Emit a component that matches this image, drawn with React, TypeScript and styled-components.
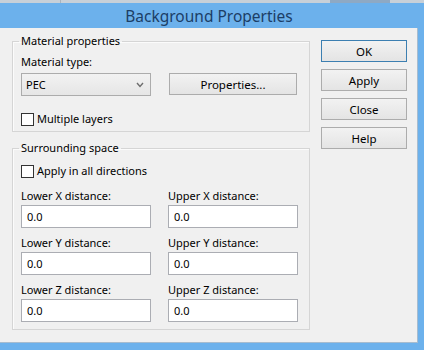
import React from "react";
import styled, { createGlobalStyle } from "styled-components";

const Global = createGlobalStyle`
  html, body { margin: 0; padding: 0; background: #f0f0f0; }
  body { font-family: "Noto Sans", "Open Sans", sans-serif; font-size: 11px; color: #000; }
  #root { width: 424px; height: 350px; overflow: hidden; }
`;

const Window = styled.div`
  width: 424px;
  height: 350px;
  display: flex;
  flex-direction: column;
`;

const TopStrip = styled.div`
  height: 3px;
  background: linear-gradient(90deg, #c8d0d8 0 60px, #aab4bd 60px 61px, #c8d0d8 61px 330px, #8ea9c4 330px 390px, #c8d0d8 390px);
`;

const TitleBar = styled.div`
  height: 25px;
  background: #6cb1ec;
  color: #1c3e66;
  font-size: 15.5px;
  display: flex;
  align-items: center;
  justify-content: center;
  padding-right: 6px;
`;

const Frame = styled.div`
  flex: 1;
  display: flex;
  border-right: 6px solid #6cb1ec;
  border-bottom: 7px solid #6cb1ec;
  min-height: 0;
`;

const Client = styled.div`
  flex: 1;
  background: #f0f0f0;
  border-right: 1px solid #a7bccf;
  border-bottom: 1px solid #a7bccf;
  padding-left: 12px;
  display: flex;
  align-items: flex-start;
`;

const LeftCol = styled.div`
  width: 298px;
  padding-top: 5px;
  display: flex;
  flex-direction: column;
`;

const Group = styled.fieldset<{ $mt?: number; $pt: number; $pb: number }>`
  margin: ${(p) => p.$mt ?? 0}px 0 0 0;
  padding: ${(p) => p.$pt}px 8px ${(p) => p.$pb}px 8px;
  border: 1px solid #d5d5d5;
  box-shadow: inset 1px 1px 0 #fbfbfb;
  min-width: 0;
`;

const Legend = styled.legend`
  padding: 0 2px;
  margin-left: -2px;
  line-height: 16px;
`;

const Label = styled.div<{ $mt?: number }>`
  line-height: 16px;
  margin-top: ${(p) => p.$mt ?? 0}px;
  white-space: nowrap;
`;

const Row = styled.div<{ $mt?: number }>`
  display: flex;
  align-items: flex-start;
  margin-top: ${(p) => p.$mt ?? 0}px;
`;

const Select = styled.div`
  width: 130px;
  height: 23px;
  box-sizing: border-box;
  border: 1px solid #acacac;
  background: linear-gradient(#f2f2f2, #e6e6e6);
  display: flex;
  align-items: center;
  justify-content: space-between;
  padding: 0 6px 0 4px;
`;

const Button = styled.div<{ $w: number; $focus?: boolean }>`
  width: ${(p) => p.$w}px;
  height: 22px;
  box-sizing: border-box;
  border: 1px solid ${(p) => (p.$focus ? "#3c7fb1" : "#acacac")};
  background: linear-gradient(#f2f2f2, #e4e4e4);
  display: flex;
  align-items: center;
  justify-content: center;
  font-size: 11.5px;
`;

const CheckRow = styled.label<{ $mt?: number }>`
  display: flex;
  align-items: center;
  gap: 3px;
  line-height: 16px;
  margin-top: ${(p) => p.$mt ?? 0}px;
`;

const Box = styled.span`
  width: 13px;
  height: 13px;
  box-sizing: border-box;
  border: 1px solid #333;
  background: #fff;
  display: inline-block;
`;

const FieldGrid = styled.div`
  display: grid;
  grid-template-columns: 130px 130px;
  column-gap: 17px;
  row-gap: 7px;
  margin-top: 9px;
`;

const Field = styled.div`
  display: flex;
  flex-direction: column;
  gap: 1px;
`;

const Input = styled.div`
  height: 23px;
  box-sizing: border-box;
  border: 1px solid #abadb3;
  background: #fff;
  padding-left: 5px;
  display: flex;
  align-items: center;
`;

const ButtonCol = styled.div`
  margin-left: 11px;
  padding-top: 12px;
  display: flex;
  flex-direction: column;
  gap: 7px;
`;

const Chevron = () => (
  <svg width="8" height="6" viewBox="0 0 8 6">
    <polyline points="1,1 4,4.5 7,1" fill="none" stroke="#6d6d6d" strokeWidth="1.4" />
  </svg>
);

const fields: [string, string][] = [
  ["Lower X distance:", "Upper X distance:"],
  ["Lower Y distance:", "Upper Y distance:"],
  ["Lower Z distance:", "Upper Z distance:"],
];

export default function App() {
  return (
    <>
      <Global />
      <Window>
        <TopStrip />
        <TitleBar>Background Properties</TitleBar>
        <Frame>
          <Client>
            <LeftCol>
              <Group $pt={5} $pb={4}>
                <Legend>Material properties</Legend>
                <Label>Material type:</Label>
                <Row $mt={3}>
                  <Select>
                    <span>PEC</span>
                    <Chevron />
                  </Select>
                  <div style={{ width: 18 }} />
                  <Button $w={128}>Properties...</Button>
                </Row>
                <CheckRow $mt={15}>
                  <Box />
                  <span>Multiple layers</span>
                </CheckRow>
              </Group>
              <Group $mt={8} $pt={7} $pb={7}>
                <Legend>Surrounding space</Legend>
                <CheckRow>
                  <Box />
                  <span>Apply in all directions</span>
                </CheckRow>
                <FieldGrid>
                  {fields.flatMap(([a, b]) => [
                    <Field key={a}>
                      <Label>{a}</Label>
                      <Input>0.0</Input>
                    </Field>,
                    <Field key={b}>
                      <Label>{b}</Label>
                      <Input>0.0</Input>
                    </Field>,
                  ])}
                </FieldGrid>
              </Group>
            </LeftCol>
            <ButtonCol>
              <Button $w={86} $focus>OK</Button>
              <Button $w={86}>Apply</Button>
              <Button $w={86}>Close</Button>
              <Button $w={86}>Help</Button>
            </ButtonCol>
          </Client>
        </Frame>
      </Window>
    </>
  );
}
